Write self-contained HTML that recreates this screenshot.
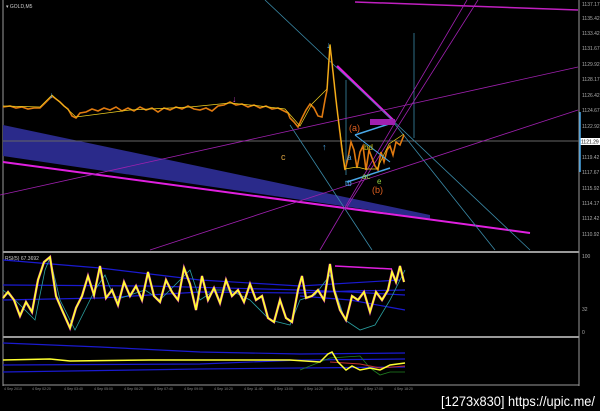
<!DOCTYPE html>
<html><head><meta charset="utf-8"><style>
html,body{margin:0;padding:0;background:#000;width:600px;height:411px;overflow:hidden}
svg{display:block}
text{font-family:"Liberation Sans",sans-serif}
</style></head><body>
<svg width="600" height="411" viewBox="0 0 600 411" xmlns="http://www.w3.org/2000/svg">
<rect width="600" height="411" fill="#000"/>
<line x1="3" y1="0" x2="3" y2="386" stroke="#9a9a9a" stroke-width="1"/>
<line x1="579" y1="0" x2="579" y2="386" stroke="#9a9a9a" stroke-width="1"/>
<line x1="3" y1="252" x2="579" y2="252" stroke="#9a9a9a" stroke-width="2"/>
<line x1="3" y1="337" x2="579" y2="337" stroke="#9a9a9a" stroke-width="2"/>
<line x1="3" y1="385" x2="579" y2="385" stroke="#9a9a9a" stroke-width="1"/>
<text x="6" y="8" fill="#ccc" font-size="5">▾ GOLD,M5</text>
<polygon points="3,125 430,215 430,219 3,156" fill="#2a2a8a"/>
<line x1="3" y1="141" x2="579" y2="141" stroke="#666" stroke-width="1"/>
<line x1="3" y1="162" x2="530" y2="233" stroke="#e020e0" stroke-width="2"/>
<line x1="355" y1="2" x2="578" y2="10" stroke="#c020c0" stroke-width="1.5"/>
<line x1="337" y1="66" x2="395" y2="122" stroke="#e020e0" stroke-width="2.5"/>
<g stroke="#3a8aa8" stroke-width="0.8">
<line x1="265" y1="0" x2="530" y2="250"/>
<line x1="290" y1="125" x2="372" y2="250"/>
<line x1="390" y1="118" x2="495" y2="250"/>
<line x1="414" y1="33" x2="414" y2="138"/>
<line x1="346" y1="80" x2="346" y2="175"/>
</g>
<g stroke="#a020b0" stroke-width="0.8">
<line x1="0" y1="195" x2="578" y2="67"/>
<line x1="150" y1="250" x2="578" y2="110"/>
<line x1="467" y1="0" x2="320" y2="250"/>
<line x1="478" y1="0" x2="345" y2="210"/>
</g>
<polyline fill="none" stroke="#e07a10" stroke-width="1.6" points="3,107 10,106 16,108 22,107 28,109 34,108 40,108 44,104 48,100 52,96 56,99 60,102 64,106 68,109 72,116 76,118 80,113 86,112 92,109 98,111 104,108 110,110 116,107 122,111 128,108 134,111 140,107 146,110 152,108 158,112 164,108 170,110 176,107 182,109 188,106 194,109 200,110 206,108 212,111 218,106 224,105 230,102 236,105 242,104 248,107 254,105 260,108 266,106 272,109 278,108 284,111 288,113 290,118 294,122 298,127 302,118 306,110 310,104 314,108 318,116 322,117 325,100 327,90 330,45 333,72 336,100 339,125 342,150 345,170 348,158 351,142 354,150 357,168 360,152 363,146 366,170 369,150 372,158 375,166 378,170 381,152 384,162 387,150 390,146 393,155 396,142 400,145 404,135"/>
<polyline fill="none" stroke="#f0d020" stroke-width="0.7" points="3,106 40,107 52,95 76,117 130,110 190,107 230,103 260,106 285,109 300,126 312,104 327,89 330,44 337,109 345,169 357,167 365,169 377,169 389,144 404,134"/>
<polyline fill="none" stroke="#4aa8e8" stroke-width="1.5" points="355,135 395,122"/>
<polyline fill="none" stroke="#4aa8e8" stroke-width="1.5" points="347,182 390,168"/>
<line x1="355" y1="135" x2="390" y2="162" stroke="#4aa8e8" stroke-width="1"/>
<text x="49" y="98" fill="#4aa8e8" font-size="9">↓</text>
<text x="326" y="48" fill="#4aa8e8" font-size="9">↓</text>
<text x="232" y="102" fill="#c040c0" font-size="9">↓</text>
<text x="322" y="150" fill="#4aa8e8" font-size="9">↑</text>
<text x="281" y="160" fill="#d8a040" font-size="9">c</text>
<text x="349" y="131" fill="#e06020" font-size="9">(a)</text>
<text x="372" y="193" fill="#e06020" font-size="9">(b)</text>
<text x="362" y="179" fill="#90d040" font-size="8">ac</text>
<text x="364" y="150" fill="#c0c020" font-size="8">bd</text>
<text x="377" y="184" fill="#90d040" font-size="8">e</text>
<text x="345" y="186" fill="#4aa8e8" font-size="8">tb</text>
<text x="347" y="160" fill="#4aa8e8" font-size="8">a</text>
<rect x="370" y="119" width="25" height="6" fill="#a020b0"/>
<g fill="#aaa" font-size="5">
<text x="582" y="6">1137.17</text><text x="582" y="20">1135.42</text><text x="582" y="35">1133.42</text>
<text x="582" y="50">1131.67</text><text x="582" y="66">1129.92</text><text x="582" y="81">1128.17</text>
<text x="582" y="97">1126.42</text><text x="582" y="112">1124.67</text><text x="582" y="128">1122.92</text>
<text x="582" y="159">1119.42</text><text x="582" y="174">1117.67</text><text x="582" y="190">1115.92</text>
<text x="582" y="205">1114.17</text><text x="582" y="220">1112.42</text><text x="582" y="236">1110.92</text>
</g>
<rect x="580" y="138" width="20" height="7" fill="#fff"/>
<text x="581" y="143.5" fill="#000" font-size="5">1121.29</text>
<line x1="580" y1="112" x2="580" y2="172" stroke="#4aa8e8" stroke-width="1.5"/>
<text x="5" y="260" fill="#ccc" font-size="5">RSI(5) 67.3692</text>
<g fill="#aaa" font-size="5"><text x="582" y="258">100</text><text x="582" y="311">32</text><text x="582" y="334">0</text></g>
<g stroke="#1a1ad0" stroke-width="1.2" fill="none">
<polyline points="3,260 100,268 200,280 300,286 400,280"/>
<polyline points="3,285 150,286 300,290 350,292 405,295"/>
<polyline points="3,300 100,298 200,292 300,293 350,291 405,290"/>
<polyline points="300,296 350,300 405,310"/>
</g>
<polyline fill="none" stroke="#e020e0" stroke-width="1.5" points="335,266 392,269"/>
<polyline fill="none" stroke="#2aa0a0" stroke-width="0.8" points="3,290 15,300 25,310 35,320 45,270 50,258 60,300 75,330 85,310 95,290 105,275 115,300 130,295 145,290 160,300 175,285 190,270 200,300 215,290 230,290 250,300 270,320 290,325 300,300 315,295 330,275 345,320 360,330 375,325 390,300 405,270"/>
<polyline fill="none" stroke="#e020e0" stroke-width="2.5" opacity="0.8" points="3,298 8,292 14,300 20,316 26,302 32,312 38,280 44,262 50,257 56,296 62,310 70,328 76,308 82,296 88,276 94,295 100,266 106,298 112,290 118,305 124,282 130,296 136,286 142,300 148,272 154,296 160,302 166,280 172,292 178,300 184,268 190,284 196,310 202,276 208,300 214,288 220,303 226,280 232,296 238,290 244,302 250,284 256,300 262,296 268,318 274,322 280,300 286,318 292,322 298,290 302,276 306,298 312,296 318,290 324,300 330,264 334,290 340,310 346,320 352,296 358,300 364,292 370,312 376,292 382,300 388,290 392,272 396,282 400,266 404,282"/>
<polyline fill="none" stroke="#ffff30" stroke-width="1.8" points="3,298 8,292 14,300 20,316 26,302 32,312 38,280 44,262 50,257 56,296 62,310 70,328 76,308 82,296 88,276 94,295 100,266 106,298 112,290 118,305 124,282 130,296 136,286 142,300 148,272 154,296 160,302 166,280 172,292 178,300 184,268 190,284 196,310 202,276 208,300 214,288 220,303 226,280 232,296 238,290 244,302 250,284 256,300 262,296 268,318 274,322 280,300 286,318 292,322 298,290 302,276 306,298 312,296 318,290 324,300 330,264 334,290 340,310 346,320 352,296 358,300 364,292 370,312 376,292 382,300 388,290 392,272 396,282 400,266 404,282"/>
<g stroke="#1a1ad0" stroke-width="1.2" fill="none">
<polyline points="3,343 100,347 200,352 300,354 405,353"/>
<polyline points="3,365 200,364 300,360 405,359"/>
<polyline points="3,372 200,369 300,368 405,367"/>
</g>
<polyline fill="none" stroke="#208020" stroke-width="0.8" points="300,370 330,358 360,356 370,368 380,375 390,372 405,372"/>
<polyline fill="none" stroke="#c03030" stroke-width="1" points="330,362 360,364 380,368 405,366"/>
<polyline fill="none" stroke="#ffff30" stroke-width="1.5" points="3,360 50,359 70,361 150,360 250,360 290,360 320,362 328,354 332,352 338,362 346,370 352,366 360,370 370,368 380,370 390,365 405,363"/>
<g fill="#888" font-size="3.5">
<text x="4" y="390">4 Sep 2010</text><text x="32" y="390">4 Sep 02:20</text><text x="64" y="390">4 Sep 03:40</text><text x="94" y="390">4 Sep 05:00</text><text x="124" y="390">4 Sep 06:20</text><text x="154" y="390">4 Sep 07:40</text><text x="184" y="390">4 Sep 09:00</text><text x="214" y="390">4 Sep 10:20</text><text x="244" y="390">4 Sep 11:40</text><text x="274" y="390">4 Sep 13:00</text><text x="304" y="390">4 Sep 14:20</text><text x="334" y="390">4 Sep 15:40</text><text x="364" y="390">4 Sep 17:00</text><text x="394" y="390">4 Sep 18:20</text>
</g>
<text x="441" y="406" fill="#fff" font-size="14" textLength="154" lengthAdjust="spacingAndGlyphs">[1273x830] https://upic.me/</text>
</svg>
</body></html>
